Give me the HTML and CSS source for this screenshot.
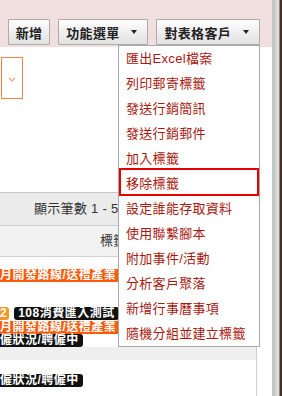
FILE: index.html
```html
<!DOCTYPE html>
<html lang="zh-Hant">
<head>
  <meta charset="UTF-8">
  <meta name="viewport" content="width=device-width, initial-scale=1.0">
  <title>客戶列表</title>
  <link rel="stylesheet" href="styles.css">
</head>
<body>
  <div class="page">
    <div class="toolbar">
      <button class="btn">新增</button>
      <button class="btn">功能選單<span class="caret"></span></button>
      <button class="btn">對表格客戶<span class="caret"></span></button>

      <ul class="menu">
        <li>匯出Excel檔案</li>
        <li>列印郵寄標籤</li>
        <li>發送行銷簡訊</li>
        <li>發送行銷郵件</li>
        <li>加入標籤</li>
        <li class="active">移除標籤</li>
        <li>設定誰能存取資料</li>
        <li>使用聯繫腳本</li>
        <li>附加事件/活動</li>
        <li>分析客戶聚落</li>
        <li>新增行事曆事項</li>
        <li>隨機分組並建立標籤</li>
      </ul>
    </div>

    <div class="picker">
      <svg width="8" height="5" viewBox="0 0 8 5"><polyline points="1,1 4,4 7,1" fill="none" stroke="#f5a07c" stroke-width="1.2"/></svg>
    </div>

    <div class="grid">
      <div class="pager">顯示筆數 1 - 5</div>
      <div class="head">標籤</div>

      <div class="row row-one">
        <div class="tags">
          <span class="tag orange cut">月開發路線/送禮產業</span>
        </div>
      </div>

      <div class="row row-two">
        <div class="tags">
          <span class="tag amber cut">2</span>
          <span class="tag black">108消費匯入測試</span>
        </div>
        <div class="tags">
          <span class="tag orange cut">月開發路線/送禮產業</span>
        </div>
        <div class="tags">
          <span class="tag black cut">僱狀況/聘僱中</span>
        </div>
      </div>

      <div class="band"></div>

      <div class="row row-three">
        <div class="tags">
          <span class="tag black cut">僱狀況/聘僱中</span>
        </div>
      </div>
    </div>
  </div>
  <div class="side"></div>
</body>
</html>
```

FILE: styles.css
```css
body { margin: 0; display: flex; height: 396px; overflow: hidden; font-family: "Liberation Sans", "Noto Sans CJK TC", sans-serif; letter-spacing: 0.3px; }
.page { width: 272px; flex-shrink: 0; background: #fff; position: relative; overflow: hidden; }
.side { width: 10px; flex-shrink: 0; background: linear-gradient(to right, #c2c2c2 0, #c8c8c8 3px, #d6d6d6 4px, #e2e2e2 7px, #3a281c 8px, #5a3a22 9px, #2a1d15 10px); }

.toolbar { height: 47px; box-sizing: border-box; padding: 19px 12px 0 0; background: #f1dfe0; display: flex; justify-content: flex-end; align-items: flex-start; gap: 8px; position: relative; }
.btn { flex-shrink: 0; white-space: nowrap; height: 26px; padding: 0 10px 0 7px; border: 1px solid #acacac; border-radius: 1px; background: linear-gradient(#fefefe, #ececec 60%, #e2e2e2); font: bold 13px "Liberation Sans", "Noto Sans CJK TC", sans-serif; letter-spacing: 0.3px; color: #222; display: flex; align-items: center; }
.btn:first-child { padding: 0 7px; }
.caret { margin-left: 12px; width: 0; height: 0; border-top: 4px solid #222; border-left: 3.5px solid transparent; border-right: 3.5px solid transparent; }

.menu { position: absolute; top: 45px; left: 118px; width: 140px; margin: 0; padding: 0; list-style: none; background: #fff; border: 1px solid #a9a9a9; z-index: 5; }
.menu li { height: 25px; line-height: 25px; padding-left: 7px; font-size: 13px; color: #a8180f; position: relative; white-space: nowrap; }
.menu li.active::after { content: ""; position: absolute; top: -3px; left: 0; right: 0; bottom: 0; border: 2px solid #e60000; }

.picker { margin: 10px 0 0 1px; width: 20px; height: 37px; padding-top: 3px; border: 1px solid #f5833f; display: flex; align-items: center; justify-content: center; }

.grid { margin-top: 93px; width: 256px; border-right: 1px solid #cfcfcf; }
.pager { height: 32px; line-height: 32px; border-top: 1px solid #c6c6c6; border-bottom: 1px solid #cdcdcd; background: #ebebeb; padding-left: 34px; font-size: 13px; color: #333; white-space: nowrap; }
.head { height: 30px; line-height: 30px; border-bottom: 1px solid #d3d3d3; background: #f2f2f2; padding-left: 100px; font-size: 13px; color: #333; }

.row { display: flex; flex-direction: column; gap: 0.5px; }
.row-one { padding: 12px 0 13px; }
.row-two { padding: 12px 0 0; }
.row-three { padding: 14px 0 10px; }
.band { height: 13px; background: #efefef; }

.tags { display: flex; gap: 5px; white-space: nowrap; }
.tag { height: 13px; display: inline-flex; align-items: center; padding: 0 4px; border-radius: 3px; font-size: 12px; line-height: 13px; font-weight: bold; color: #fff; letter-spacing: 0.5px; }
.tag.cut { margin-left: -4px; }
.tag.orange { background: #fb5a0b; }
.tag.amber { background: #f7961f; padding: 0 2px 0 4px; }
.tag.black { background: #111; }
```
